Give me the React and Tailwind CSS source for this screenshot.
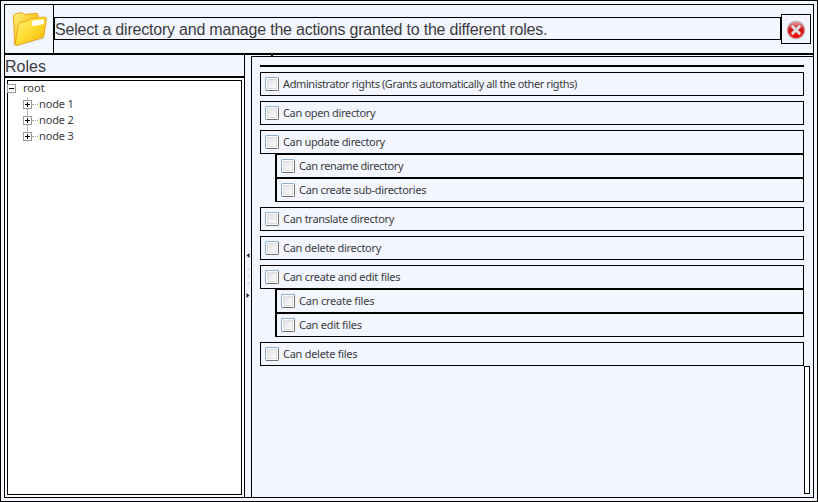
const small = "font-['Noto_Sans',sans-serif] text-[11px] leading-4 text-[#3c3c3c]";

function FolderIcon() {
  return (
    <svg width="40" height="40" viewBox="0 0 40 40">
      <defs>
        <linearGradient id="back" x1="0" y1="0" x2="1" y2="1">
          <stop offset="0" stopColor="#fff27a" />
          <stop offset="0.5" stopColor="#fbc92c" />
          <stop offset="1" stopColor="#f3b91c" />
        </linearGradient>
        <linearGradient id="front" x1="0" y1="0" x2="1" y2="1">
          <stop offset="0" stopColor="#fff27c" />
          <stop offset="0.5" stopColor="#ffdc30" />
          <stop offset="1" stopColor="#f7ac00" />
        </linearGradient>
      </defs>
      <path d="M3 34 L7 37.500 L34 30 L36 27 Z" fill="#9a9a9a" opacity="0.3" />
      <path d="M4.500 7 Q4.500 5.500 6 5.200 L12 3.700 Q14 3.500 15 5.500 L27 4.300 Q29.200 4.300 29.200 6.500 L29 12 L7 36 Q5.500 36 5.500 34 Z" fill="url(#back)" stroke="#e8a818" strokeWidth="1" />
      <path d="M9.500 15 Q9.700 13.300 11.500 13 L18 12 Q20.500 11.500 21.500 9.700 L35.500 8 Q37.500 8 37.300 10 L35 26.500 Q34.700 28.300 33 28.800 L8 36.300 Q6 36.500 6.200 34.500 Z" fill="url(#front)" stroke="#eaa810" strokeWidth="1" />
      <path d="M23.500 11.800 L35 10.500 L34.700 15 L23.800 17 Q22.600 17 22.600 15.800 Z" fill="#fff" />
    </svg>
  );
}

function CloseIcon() {
  return (
    <svg width="20" height="20" viewBox="0 0 20 20" className="mt-px">
      <defs>
        <linearGradient id="red" x1="0" y1="0" x2="0" y2="1">
          <stop offset="0" stopColor="#e0a8a8" />
          <stop offset="0.45" stopColor="#d01818" />
          <stop offset="1" stopColor="#fa1010" />
        </linearGradient>
      </defs>
      <circle cx="10" cy="10" r="8.800" fill="url(#red)" stroke="#c4b8b8" strokeWidth="1.300" />
      <path d="M6.700 6.700 L13.300 13.300 M13.300 6.700 L6.700 13.300" stroke="#dcdcdc" strokeWidth="3" strokeLinecap="round" />
    </svg>
  );
}

function Checkbox() {
  return (
    <span className="flex size-[14px] shrink-0 items-center justify-center rounded-[2px] border border-t-[#90aed0] border-l-[#90aed0] border-r-[#707070] border-b-[#707070] bg-white">
      <span className="size-[10px] border border-[#dcdcdf] bg-linear-to-br from-[#e4e4e8] to-[#fafafa]" />
    </span>
  );
}

function Row({ label, tracking }) {
  return (
    <div className={"flex h-6 items-center gap-1 border border-black pl-1 " + small}>
      <Checkbox />
      <span className={"whitespace-nowrap " + tracking}>{label}</span>
    </div>
  );
}

function Toggle({ plus }) {
  return (
    <svg width="9" height="9" viewBox="0 0 9 9" shapeRendering="crispEdges" className="shrink-0">
      <rect x="0.500" y="0.500" width="8" height="8" fill="#fff" stroke="#999" />
      <path d={plus ? "M2 4.500H7M4.500 2V7" : "M2 4.500H7"} stroke="#000" />
    </svg>
  );
}

function Node({ label }) {
  return (
    <div className="group flex h-4 items-center pl-4">
      <div className="flex h-4 flex-col items-center">
        <span className="h-[3px] border-l border-dashed border-[#bbb]" />
        <Toggle plus />
        <span className="h-[4px] border-l border-dashed border-[#bbb] group-last:invisible" />
      </div>
      <span className="mt-[-1px] w-[6px] border-t border-dotted border-[#aaa]" />
      <span className="-mt-[2px] pl-px tracking-[-0.15px]">{label}</span>
    </div>
  );
}

const groups = [
  { label: "Administrator rights (Grants automatically all the other rigths)", tracking: "tracking-[-0.4px]" },
  { label: "Can open directory", tracking: "tracking-[-0.33px]" },
  {
    label: "Can update directory",
    tracking: "tracking-[-0.33px]",
    children: [
      { label: "Can rename directory", tracking: "tracking-[-0.38px]" },
      { label: "Can create sub-directories", tracking: "tracking-[-0.3px]" },
    ],
  },
  { label: "Can translate directory", tracking: "tracking-[-0.28px]" },
  { label: "Can delete directory", tracking: "tracking-[-0.3px]" },
  {
    label: "Can create and edit files",
    tracking: "tracking-[-0.27px]",
    children: [
      { label: "Can create files", tracking: "tracking-[-0.22px]" },
      { label: "Can edit files", tracking: "tracking-[-0.26px]" },
    ],
  },
  { label: "Can delete files", tracking: "tracking-[-0.28px]" },
];

export default function App() {
  return (
    <div className="h-[502px] w-[818px] overflow-hidden border border-black bg-[#f3f6ff] p-[3px] font-['Liberation_Sans',Arial,sans-serif] text-[#3c3c3c]">
      <div className="flex h-[494px] w-[810px] flex-col border border-black">
        <header className="flex h-[50px] shrink-0 items-center border-b-2 border-black">
          <div className="flex h-full w-[49px] items-center justify-center border-r border-black"><FolderIcon /></div>
          <h1 className="mb-[2px] flex h-[23px] w-[727px] items-center border border-black pt-[3px] text-[16px] leading-5 tracking-[-0.21px] whitespace-nowrap">Select a directory and manage the actions granted to the different roles.</h1>
          <button className="flex size-[30px] items-center justify-center border border-black"><CloseIcon /></button>
        </header>
        <div className="flex min-h-0 flex-1">
          <aside className="flex w-[240px] flex-col border-r border-black">
            <h2 className="h-[23px] shrink-0 border-b-2 border-black text-[16px] leading-[24px]">Roles</h2>
            <div className="flex-1 bg-white p-[2px]">
              <div className={"h-full border border-black " + small}>
                <div className="-ml-px">
                  <div className="flex h-4 items-start gap-[7px]"><span className="pt-[3px]"><Toggle /></span><span className="-mt-px">root</span></div>
                  <Node label="node 1" /><Node label="node 2" /><Node label="node 3" />
                </div>
              </div>
            </div>
          </aside>
          <div className="flex w-[6px] flex-col items-center justify-center">
            <svg width="6" height="50" viewBox="0 0 6 50">
              <path d="M4.500 2V7L1.500 4.500ZM1.500 42V47L4.500 44.500Z" fill="#222" />
              <path d="M2 19.500l3-2M2 26.500l3-2M2 33.500l3-2" stroke="#ccd" />
            </svg>
          </div>
          <div className="flex flex-1 flex-col">
            <div className="ml-5 h-px w-[2px] shrink-0 bg-black" />
            <main className="flex flex-1 border-t border-l border-black">
              <div className="flex w-[552px] flex-col pt-2 pl-2">
                <div className="h-[2px] bg-black" />
                <div className="flex flex-col gap-[5px] pt-[5px]">
                  {groups.map((g) => (
                    <section key={g.label}>
                      <Row label={g.label} tracking={g.tracking} />
                      {g.children && (
                        <div className="ml-[15px] border-l border-black">
                          {g.children.map((c) => <Row key={c.label} label={c.label} tracking={c.tracking} />)}
                        </div>
                      )}
                    </section>
                  ))}
                </div>
              </div>
              <div className="mb-[3px] h-[128px] w-[6px] self-end border border-black bg-white" />
            </main>
          </div>
        </div>
      </div>
    </div>
  );
}
